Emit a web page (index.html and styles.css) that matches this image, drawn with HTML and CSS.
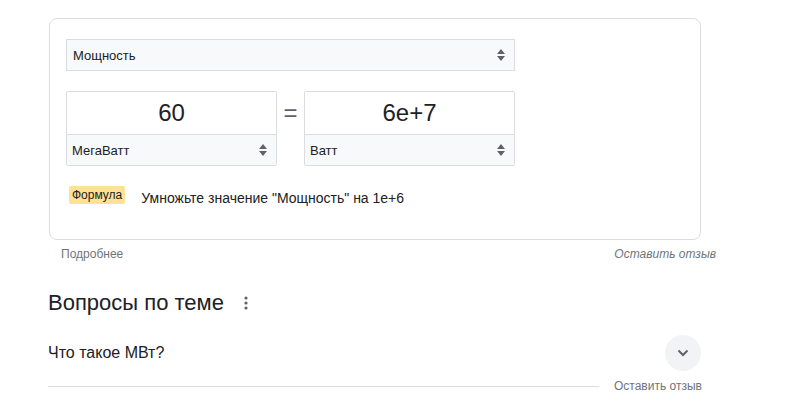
FILE: index.html
```html
<!DOCTYPE html>
<html lang="ru">
<head>
<meta charset="utf-8">
<link rel="stylesheet" href="styles.css">
</head>
<body>
<div class="page">
  <div class="card">
    <div class="select select-top">
      <span>Мощность</span>
      <svg class="spin" width="8" height="12" viewBox="0 0 8 12"><path d="M4 0L8 5H0Z M0 7H8L4 12Z" fill="#5f6368"/></svg>
    </div>
    <div class="conv">
      <div class="unit">
        <div class="value">60</div>
        <div class="select select-unit">
          <span>МегаВатт</span>
          <svg class="spin" width="8" height="12" viewBox="0 0 8 12"><path d="M4 0L8 5H0Z M0 7H8L4 12Z" fill="#5f6368"/></svg>
        </div>
      </div>
      <div class="eq">=</div>
      <div class="unit">
        <div class="value">6e+7</div>
        <div class="select select-unit">
          <span>Ватт</span>
          <svg class="spin" width="8" height="12" viewBox="0 0 8 12"><path d="M4 0L8 5H0Z M0 7H8L4 12Z" fill="#5f6368"/></svg>
        </div>
      </div>
    </div>
    <div class="formula">
      <span class="chip">Формула</span>
      <span class="ftext">Умножьте значение "Мощность" на 1e+6</span>
    </div>
  </div>
  <div class="under">
    <span class="more">Подробнее</span>
    <span class="fb-italic">Оставить отзыв</span>
  </div>
  <div class="related">
    <div class="rel-head">
      <h2>Вопросы по теме</h2>
      <svg class="dots" width="4" height="14" viewBox="0 0 4 14"><circle cx="2" cy="2" r="1.6" fill="#5f6368"/><circle cx="2" cy="7" r="1.6" fill="#5f6368"/><circle cx="2" cy="12" r="1.6" fill="#5f6368"/></svg>
    </div>
    <div class="q">
      <span>Что такое МВт?</span>
      <span class="chev"><svg width="12" height="8" viewBox="0 0 12 8"><path d="M1.5 1.5L6 6L10.5 1.5" fill="none" stroke="#5f6368" stroke-width="2"/></svg></span>
    </div>
    <div class="foot">
      <div class="line"></div>
      <span class="fb">Оставить отзыв</span>
    </div>
  </div>
</div>
</body>
</html>
```
FILE: styles.css
```css
html, body {
  margin: 0;
  padding: 0;
  background: #fff;
  font-family: "Liberation Sans", Arial, sans-serif;
  color: #202124;
}
.page {
  padding: 18px 0 0 49px;
  width: 700px;
}
.card {
  box-sizing: border-box;
  width: 652px;
  height: 222px;
  border: 1px solid #dadce0;
  border-radius: 8px;
  padding: 20px 16px 0 16px;
}
.select {
  box-sizing: border-box;
  display: flex;
  align-items: center;
  justify-content: space-between;
  background: #f8f9fa;
  font-size: 13px;
  color: #202124;
}
.select-top {
  width: 449px;
  height: 32px;
  border: 1px solid #dadce0;
  padding: 0 9px 0 6px;
}
.conv {
  display: flex;
  margin-top: 20px;
  align-items: flex-start;
}
.unit {
  box-sizing: border-box;
  width: 211px;
  height: 75px;
  border: 1px solid #dadce0;
  border-radius: 2px;
  display: flex;
  flex-direction: column;
}
.value {
  height: 42px;
  display: flex;
  align-items: center;
  justify-content: center;
  font-size: 24px;
  color: #202124;
  border-bottom: 1px solid #dadce0;
}
.select-unit {
  flex: 1;
  padding: 0 9px 0 5px;
}
.eq {
  width: 27px;
  text-align: center;
  font-size: 24px;
  color: #5f6368;
  line-height: 44px;
}
.formula {
  display: flex;
  align-items: center;
  margin-top: 23px;
  padding-left: 3px;
}
.chip {
  background: #fde293;
  font-size: 12px;
  line-height: 18px;
  padding: 0 3px;
  border-radius: 2px;
  position: relative;
  top: -3px;
  color: #202124;
}
.ftext {
  margin-left: 16px;
  font-size: 14px;
  color: #202124;
}
.under {
  display: flex;
  justify-content: space-between;
  padding: 6px 0 0 12px;
  width: 655px;
  font-size: 12px;
  color: #70757a;
  line-height: 16px;
}
.fb-italic {
  font-style: italic;
}
.related {
  margin-top: 27px;
  margin-left: -1px;
}
.rel-head {
  display: flex;
  align-items: center;
}
.rel-head h2 {
  margin: 0;
  font-weight: normal;
  font-size: 22px;
  line-height: 28px;
  color: #202124;
}
.dots {
  margin-left: 20px;
}
.q {
  display: flex;
  align-items: center;
  justify-content: space-between;
  margin-top: 18px;
  width: 653px;
  font-size: 16px;
  color: #202124;
}
.chev {
  width: 36px;
  height: 36px;
  border-radius: 50%;
  background: #f1f3f4;
  display: flex;
  align-items: center;
  justify-content: center;
}
.foot {
  display: flex;
  align-items: center;
  margin-top: 8px;
}
.line {
  width: 551px;
  height: 1px;
  background: #dadce0;
  flex: none;
}
.fb {
  margin-left: 15px;
  font-size: 12px;
  color: #70757a;
  white-space: nowrap;
}
```
